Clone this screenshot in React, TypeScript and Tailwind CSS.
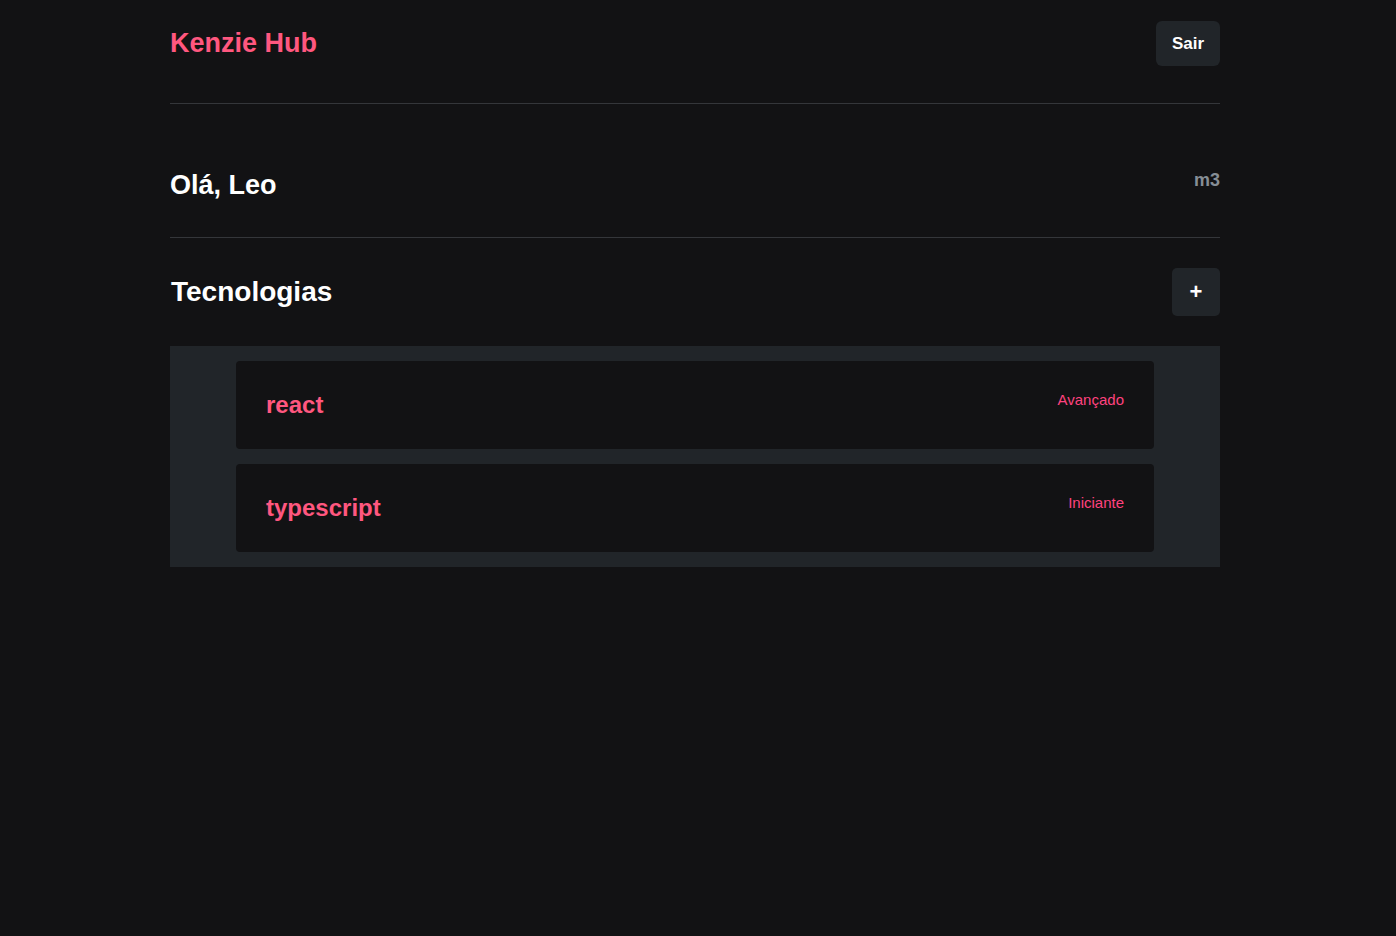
import React from "react";

const techs = [
  { name: "react", level: "Avançado" },
  { name: "typescript", level: "Iniciante" },
];

export default function App() {
  return (
    <div
      className="min-h-[936px] w-full bg-[#121214] text-white"
      style={{ fontFamily: '"Liberation Sans", Arial, sans-serif' }}
    >
      <div className="ml-[170px] w-[1050px]">
        <header className="flex items-center justify-between pt-[21px] pb-[37px] border-b border-[#34363a]">
          <h1 className="text-[27px] font-bold leading-[45px] text-[#ff577f]">Kenzie Hub</h1>
          <button className="h-[45px] w-[64px] rounded-[6px] bg-[#212529] text-[17px] font-bold text-white">
            Sair
          </button>
        </header>

        <section className="flex items-start justify-between pt-[65px] pb-[36px] border-b border-[#34363a]">
          <h2 className="text-[27px] font-bold leading-[32px] text-white">Olá, Leo</h2>
          <span className="mt-[1px] text-[18px] font-bold leading-[21px] text-[#868e96]">m3</span>
        </section>

        <section className="flex items-center justify-between pt-[30px] pb-[30px]">
          <h2 className="ml-[1px] text-[28px] font-bold leading-[32px] text-white">Tecnologias</h2>
          <button className="flex h-[48px] w-[48px] items-center justify-center rounded-[5px] bg-[#212529] text-[22px] font-bold leading-none text-white">
            +
          </button>
        </section>

        <ul className="flex flex-col gap-[15px] bg-[#212529] px-[66px] py-[15px]">
          {techs.map((t) => (
            <li
              key={t.name}
              className="flex h-[88px] items-center justify-between rounded-[4px] bg-[#121214] px-[30px]"
            >
              <span className="text-[24px] font-bold text-[#ff577f]">{t.name}</span>
              <span className="mb-[10px] text-[15px] text-[#ff427f]">{t.level}</span>
            </li>
          ))}
        </ul>
      </div>
    </div>
  );
}
